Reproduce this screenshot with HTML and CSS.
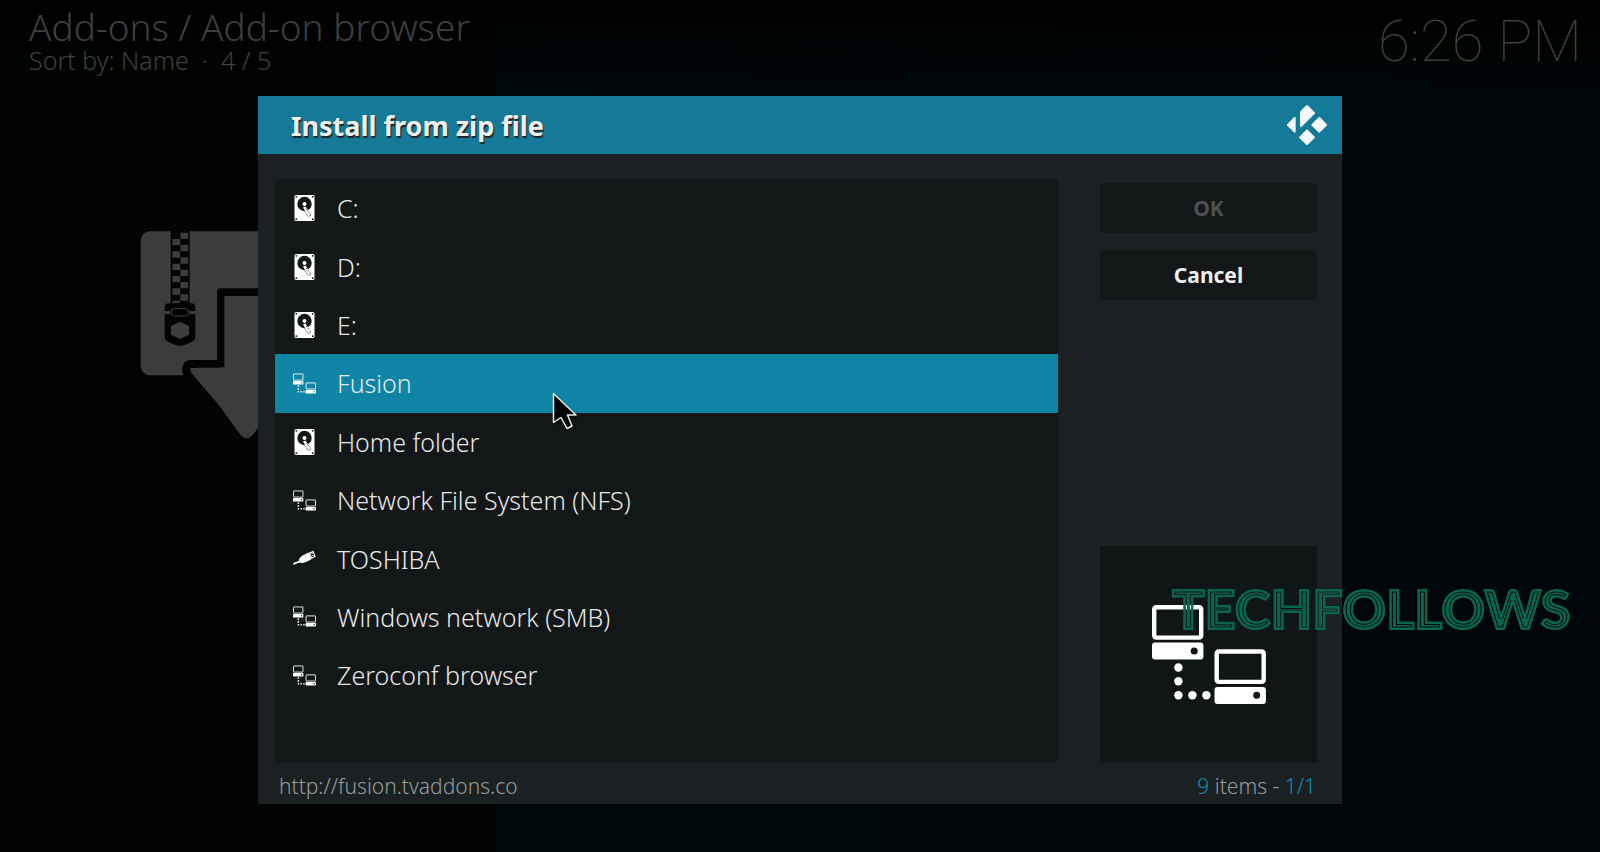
FILE: index.html
```html
<!DOCTYPE html>
<html lang="en">
<head>
  <meta charset="utf-8">
  <meta name="viewport" content="width=device-width, initial-scale=1.0">
  <title>Install from zip file</title>
  <link rel="stylesheet" href="styles.css">
</head>
<body>

  <!-- Shared icons -->
  <svg class="sprite" aria-hidden="true">
    <symbol id="icon-disk" viewBox="0 0 20 26">
      <rect x="0" y="0" width="20" height="26" rx="1.5" fill="#fff"/>
      <circle cx="10" cy="9" r="7.2" fill="#121616"/>
      <circle cx="10" cy="9" r="2" fill="#fff"/>
      <path d="M8.5 12.5l2.5-1 5 7.5a1.6 1.6 0 0 1-3 2z" fill="#fff"/>
      <path d="M8.5 13.5l4.5 7a1.6 1.6 0 0 0 2.8-1.6L11.6 14" fill="none" stroke="#121616" stroke-width=".7" stroke-dasharray="1.5 .7"/>
      <g fill="#121616">
        <circle cx="1.8" cy="1.8" r=".9"/>
        <circle cx="18.2" cy="1.8" r=".9"/>
        <circle cx="1.8" cy="24.2" r=".9"/>
        <circle cx="18.2" cy="24.2" r=".9"/>
      </g>
    </symbol>
    <symbol id="icon-network" viewBox="0 0 114 99">
      <g fill="none" stroke="#fff" stroke-width="4.4">
        <rect x="2.2" y="2.2" width="47" height="30.4" rx="2"/>
        <rect x="64.7" y="46.5" width="47" height="30.4" rx="2"/>
      </g>
      <g fill="#fff" fill-rule="evenodd">
        <path d="M3 37.5h45.4a3 3 0 0 1 3 3v11a3 3 0 0 1-3 3H3a3 3 0 0 1-3-3v-11a3 3 0 0 1 3-3zM42.2 42.4a3.5 3.5 0 1 0 0 7a3.5 3.5 0 1 0 0-7z"/>
        <path d="M65.5 82h45.4a3 3 0 0 1 3 3v11a3 3 0 0 1-3 3H65.5a3 3 0 0 1-3-3V85a3 3 0 0 1 3-3zM104.7 86.8a3.5 3.5 0 1 0 0 7a3.5 3.5 0 1 0 0-7z"/>
        <circle cx="26.4" cy="62.5" r="4.2"/>
        <circle cx="26.4" cy="76.3" r="4.2"/>
        <circle cx="26.4" cy="90.3" r="4.2"/>
        <circle cx="40.4" cy="90.3" r="4.2"/>
        <circle cx="54.4" cy="90.3" r="4.2"/>
      </g>
    </symbol>
    <symbol id="icon-usb" viewBox="0 0 24 16">
      <path d="M0 13C2 11.500 4 11.500 6 10.500C6.500 7 9 5 16.500 1.800l2.600 7C14 12 9.500 13.500 7.200 12.300C5 13.500 3 13 1 15z" fill="#fff"/>
      <path d="M17.300 2.300L21 .8l2 5-3.500 1.800z" fill="none" stroke="#fff" stroke-width="1.200"/>
      <path d="M19.200 2.800l1.300-.6M20.200 5.200l1.200-.6" stroke="#fff" stroke-width="1.200"/>
    </symbol>
  </svg>

  <div class="browser">
    <header class="browser-header">
      <div>
        <h1>Add-ons / Add-on browser</h1>
        <p class="sort">Sort by: Name &nbsp;·&nbsp; 4 / 5</p>
      </div>
      <time class="clock">6:26 PM</time>
    </header>
    <svg class="zip-art" viewBox="60 60 642 630" aria-hidden="true">
      <path d="M90 64H672a28 28 0 0 1 28 28V468a28 28 0 0 1-28 28H90a28 28 0 0 1-28-28V92a28 28 0 0 1 28-28z" fill="#3c3c3c"/>
      <path d="M303 472V247H457V462H560L545 500L380 700L202 494Q192 462 214 462H303" fill="#3c3c3c" stroke="#020403" stroke-width="24" stroke-linejoin="round"/>
      <path d="M202 496L370 708H392L560 496" fill="none" stroke="#020403" stroke-width="28"/>
      <path d="M313 258H447V473H530Q542 474 536 486L400 673Q380 697 360 673L224 486Q218 474 230 473H313z" fill="#3c3c3c"/>
      <rect x="152" y="60" width="57" height="222" fill="#020403"/>
      <path d="M193 68V280" stroke="#3c3c3c" stroke-width="23" stroke-dasharray="19 18"/>
      <path d="M169 87V280" stroke="#3c3c3c" stroke-width="23" stroke-dasharray="19 18"/>
      <path d="M144 280H216Q226 282 226 292V303H134V292Q134 282 144 280zM134 313H226V386Q220 398 180 408Q140 398 134 386z" fill="#020403"/>
      <rect x="151" y="292" width="57" height="30" rx="8" fill="#020403"/>
      <rect x="155" y="296" width="49" height="22" rx="6" fill="none" stroke="#3c3c3c" stroke-width="3"/>
      <path d="M180 335L207 348V374L180 387L153 374V348z" fill="#3c3c3c"/>
    </svg>
  </div>

  <main class="overlay">
    <section class="dialog" aria-labelledby="dialogTitle">
      <header class="dialog-header">
        <h2 id="dialogTitle">Install from zip file</h2>
        <svg class="logo" viewBox="0 0 120 120" aria-hidden="true">
          <g fill="#f2f8fb" stroke="#f2f8fb" stroke-width="6" stroke-linejoin="round">
            <path d="M60 3L81 24L42 63V21z"/>
            <path d="M97 39L117 60L97 80L76 60z"/>
            <path d="M60 76L81 97L60 117L39 97z"/>
            <path d="M23 39V80L3 60z"/>
          </g>
        </svg>
      </header>

      <div class="dialog-body">
        <ul class="sources">
          <li><button type="button"><svg class="disk"><use href="#icon-disk"/></svg>C:</button></li>
          <li><button type="button"><svg class="disk"><use href="#icon-disk"/></svg>D:</button></li>
          <li><button type="button"><svg class="disk"><use href="#icon-disk"/></svg>E:</button></li>
          <li class="selected">
            <button type="button"><svg><use href="#icon-network"/></svg>Fusion</button>
            <svg class="cursor" viewBox="0 0 26 40" aria-hidden="true">
              <path d="M1.500 1.500V30.500L9 25.500L15 36.500L20 34L15.500 23H24z" fill="#000" stroke="#e6eef0" stroke-width="1.500" stroke-linejoin="round"/>
            </svg>
          </li>
          <li><button type="button"><svg class="disk"><use href="#icon-disk"/></svg>Home folder</button></li>
          <li><button type="button"><svg><use href="#icon-network"/></svg>Network File System (NFS)</button></li>
          <li><button type="button"><svg><use href="#icon-usb"/></svg>TOSHIBA</button></li>
          <li><button type="button"><svg><use href="#icon-network"/></svg>Windows network (SMB)</button></li>
          <li><button type="button"><svg><use href="#icon-network"/></svg>Zeroconf browser</button></li>
        </ul>

        <div class="side">
          <button class="action" type="button" disabled>OK</button>
          <button class="action" type="button">Cancel</button>
          <div class="preview">
            <svg><use href="#icon-network"/></svg>
          </div>
        </div>
      </div>

      <footer class="dialog-footer">
        <span>http://fusion.tvaddons.co</span>
        <span><b>9</b> items - <b>1/1</b></span>
      </footer>
    </section>
  </main>

  <!-- Inline lettering: the word is masked by its own inner outlines -->
  <svg class="watermark" viewBox="0 0 420 80">
    <mask id="lines" maskUnits="userSpaceOnUse" x="0" y="0" width="420" height="80">
      <use href="#brand" fill="#fff" stroke="#000" stroke-width="5"/>
      <use href="#brand" fill="none" stroke="#fff" stroke-width="3"/>
    </mask>
    <defs>
      <text id="brand" x="2" y="57">TECHFOLLOWS</text>
    </defs>
    <g mask="url(#lines)"><text x="2" y="57" fill="#08654f" stroke="#08654f" stroke-width="2">TECHFOLLOWS</text></g>
  </svg>

</body>
</html>
```

FILE: styles.css
```css
* {
  box-sizing: border-box;
}
body {
  margin: 0;
  height: 100vh;
  overflow: hidden;
  font-family: "Noto Sans", "Open Sans", sans-serif;
  font-weight: 300;
  color: #e6e8e8;
  background: linear-gradient(90deg, #020403 31%, #00080b 31%, #010608);
}
h1, h2, p, ul {
  margin: 0;
  padding: 0;
  font-weight: 300;
}
button {
  border: 0;
  font-family: inherit;
}
.sprite {
  display: none;
}

/* Add-on browser behind the dialog */
.browser {
  color: #3e3e3e;
}
.browser-header {
  display: flex;
  justify-content: space-between;
  padding: 5px 18px 0 29px;
  height: 96px;
  background: linear-gradient(#000, transparent);
}
h1 {
  font-size: 37px;
  line-height: 44px;
}
.sort {
  font-size: 25px;
  line-height: 22px;
}
.clock {
  font-family: Roboto, sans-serif;
  font-weight: 100;
  font-size: 58px;
  line-height: 73px;
}
.zip-art {
  display: block;
  width: 214px;
  height: 210px;
  margin: 134px 0 0 140px;
}

/* Dialog */
.overlay {
  position: fixed;
  inset: 0;
  display: flex;
  padding: 96px 258px 48px;
}
.dialog {
  flex: 1;
  display: flex;
  flex-direction: column;
  background: #1b2123;
}
.dialog-header {
  display: flex;
  align-items: center;
  justify-content: space-between;
  height: 58px;
  padding: 0 15px 0 33px;
  background: #157a98;
}
h2 {
  font-size: 27px;
  font-weight: 700;
  color: #f0f0f0;
  text-shadow: 1px 2px 1px #222;
}
.logo {
  width: 40px;
  height: 40px;
}
.dialog-body {
  flex: 1;
  display: grid;
  grid-template-columns: 1fr 217px;
  gap: 42px;
  padding: 25px 25px 0 17px;
}
.sources {
  display: grid;
  grid-template-rows: repeat(10, 1fr);
  list-style: none;
  background: #131717;
  border-radius: 4px;
}
.sources li {
  position: relative;
  display: flex;
}
.sources button {
  flex: 1;
  display: flex;
  align-items: center;
  gap: 21px;
  padding: 0 18px;
  background: none;
  color: inherit;
  font-size: 25px;
  font-weight: 300;
}
.sources .selected {
  background: #0f84a5;
}
.sources button svg {
  width: 23px;
  height: 21px;
}
.sources button .disk {
  height: 26px;
}
.cursor {
  position: absolute;
  left: 277px;
  top: 38px;
  z-index: 1;
  width: 26px;
  height: 40px;
  filter: drop-shadow(1px 2px 1px #0006);
}
.side {
  display: flex;
  flex-direction: column;
  gap: 17px;
  padding-top: 4px;
}
.action {
  height: 50px;
  border-radius: 4px;
  background: #131717;
  color: #f0f0f0;
  font-size: 21px;
  font-weight: 700;
}
.action:disabled {
  color: #4d5050;
}
.preview {
  display: flex;
  align-items: center;
  justify-content: center;
  height: 217px;
  margin-top: auto;
  background: #101515;
}
.preview svg {
  width: 114px;
  height: 99px;
}
.dialog-footer {
  display: flex;
  align-items: center;
  justify-content: space-between;
  height: 41px;
  padding: 4px 26px 0 21px;
  font-size: 21px;
  color: #989a9b;
}
.dialog-footer b {
  font-weight: inherit;
  color: #128bb0;
}

.watermark {
  position: absolute;
  right: 10px;
  bottom: 200px;
  width: 420px;
  height: 80px;
  font-family: Lato, sans-serif;
  font-size: 54px;
  font-weight: 900;
}
```
